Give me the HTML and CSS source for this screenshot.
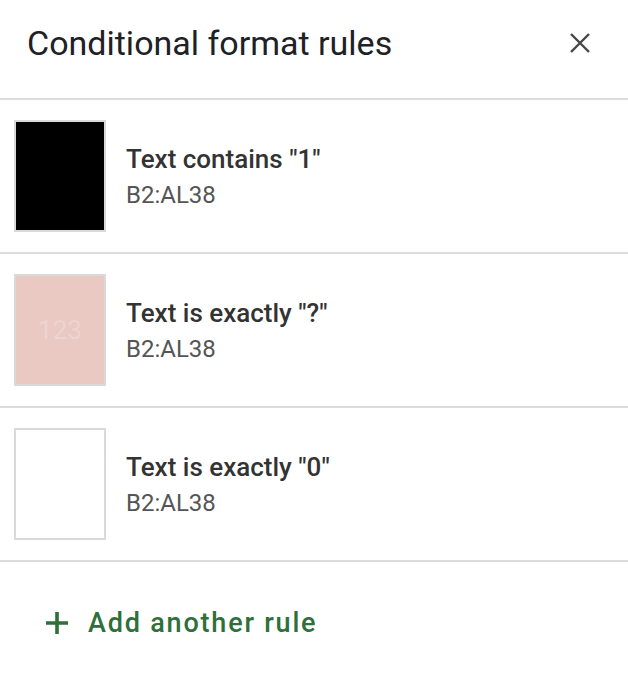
FILE: index.html
```html
<!DOCTYPE html>
<html>
<head>
<meta charset="utf-8">
<link rel="stylesheet" href="styles.css">
</head>
<body>
<div class="panel">
  <div class="header">
    <div class="title">Conditional format rules</div>
    <svg class="close" width="22" height="22" viewBox="0 0 22 22"><path d="M2 2 L20 20 M20 2 L2 20" stroke="#444746" stroke-width="2.4" fill="none"/></svg>
  </div>
  <div class="rule">
    <div class="swatch swatch-black"></div>
    <div class="info">
      <div class="name">Text contains "1"</div>
      <div class="range">B2:AL38</div>
    </div>
  </div>
  <div class="rule">
    <div class="swatch swatch-pink"><span class="sample">123</span></div>
    <div class="info">
      <div class="name">Text is exactly "?"</div>
      <div class="range">B2:AL38</div>
    </div>
  </div>
  <div class="rule">
    <div class="swatch swatch-white"></div>
    <div class="info">
      <div class="name">Text is exactly "0"</div>
      <div class="range">B2:AL38</div>
    </div>
  </div>
  <div class="add">
    <svg class="plus" width="22" height="22" viewBox="0 0 22 22"><path d="M11 0 V22 M0 11 H22" stroke="#2e6f3a" stroke-width="3.6" fill="none"/></svg>
    <span class="add-text">Add another rule</span>
  </div>
</div>
</body>
</html>
```

FILE: styles.css
```css
html, body {
  margin: 0;
  padding: 0;
  background: #ffffff;
}
.panel {
  width: 628px;
  font-family: Roboto, "Liberation Sans", sans-serif;
}
.header {
  height: 98px;
  display: flex;
  align-items: center;
  justify-content: space-between;
  padding: 0 37px 0 27px;
  border-bottom: 2px solid #dadce0;
  box-sizing: content-box;
}
.title {
  font-size: 34px;
  color: #202124;
  font-weight: 400;
  margin-top: -12px;
}
.close {
  margin-top: -12px;
}
.rule {
  display: flex;
  align-items: center;
  gap: 20px;
  padding: 20px 14px 20px;
  border-bottom: 2px solid #dadce0;
}
.swatch {
  width: 88px;
  height: 108px;
  border: 2px solid #dadada;
  display: flex;
  align-items: center;
  justify-content: center;
  flex: none;
}
.swatch-black { background: #000000; }
.swatch-pink { background: #eac9c3; }
.swatch-white { background: #ffffff; }
.sample {
  font-size: 26px;
  color: #eed3cf;
  font-family: Roboto, sans-serif;
}
.info {
  display: flex;
  flex-direction: column;
  gap: 7px;
}
.name {
  font-size: 26px;
  font-weight: 500;
  color: #333333;
}
.range {
  font-size: 24px;
  color: #555555;
}
.add {
  display: flex;
  align-items: center;
  gap: 20px;
  padding: 45px 0 0 46px;
}
.add-text {
  font-size: 27px;
  font-weight: 500;
  color: #2e6f3a;
  letter-spacing: 1.8px;
}
```
